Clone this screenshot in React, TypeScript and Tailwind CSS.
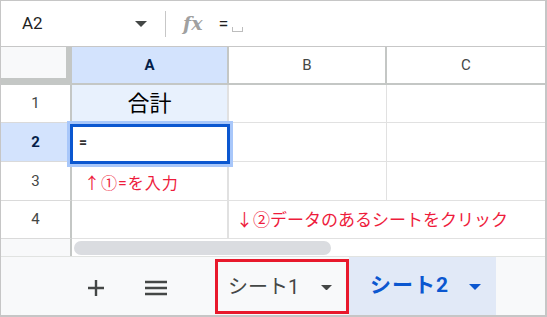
import React from 'react';

const jp = { fontFamily: 'Roboto, "Noto Sans CJK JP", sans-serif' };

const Caret = ({ color = '#444746', size = 10 }: { color?: string; size?: number }) => (
  <svg width={size} height={size / 2} viewBox="0 0 10 5">
    <path d="M0 0 L10 0 L5 5 Z" fill={color} />
  </svg>
);

const ColHeader = ({ label, active, w }: { label: string; active?: boolean; w: string }) => (
  <div
    className={`${w} h-full flex items-center justify-center border-r-2 border-b-2 border-[#c4c7c5] text-[15px] ${
      active ? 'bg-[#d3e3fd] text-[#041e49] font-bold' : 'bg-white text-[#444746]'
    }`}
  >
    {label}
  </div>
);

const RowHead = ({ n, active }: { n: string; active?: boolean }) => (
  <div
    className={`w-[71px] h-full flex items-center justify-center border-r-2 border-[#c4c7c5] border-b border-b-[#dadada] text-[15px] ${
      active ? 'bg-[#d3e3fd] text-[#041e49] font-bold' : 'bg-white text-[#444746]'
    }`}
  >
    {n}
  </div>
);

export default function App() {
  return (
    <div
      className="w-[547px] h-[317px] flex flex-col bg-white border-t border-l border-r-2 border-b-2 border-[#c6c6c6] overflow-hidden"
      style={jp}
    >
      {/* formula bar */}
      <div className="h-[46px] shrink-0 flex items-center border-b border-[#c7c7c7]">
        <div className="w-[164px] flex items-center pl-[21px] pr-[18px]">
          <span className="text-[17px] text-[#1f1f1f] flex-1">A2</span>
          <Caret size={12} />
        </div>
        <div className="w-px h-[26px] bg-[#c7c7c7]" />
        <span className="ml-[17px] text-[19px] italic font-bold text-[#a0a0a0]" style={{ fontFamily: '"DejaVu Serif", serif' }}>
          fx
        </span>
        <span className="ml-[16px] text-[18px] text-[#1f1f1f]">=</span>
        <span className="ml-[4px] mt-[12px] w-[11px] h-[5px] border-l border-r border-b border-[#bdbdbd]" />
      </div>

      {/* grid */}
      <div className="relative flex flex-col">
        <div className="h-[38px] flex">
          <div className="w-[71px] h-full bg-[#c4c7c5] flex items-start">
            <div className="w-[65px] h-[31px] bg-[#f8f9fa]" />
          </div>
          <ColHeader label="A" active w="w-[157px]" />
          <ColHeader label="B" w="w-[158px]" />
          <div className="flex-1 h-full flex items-center justify-center border-b-2 border-[#c4c7c5] text-[15px] text-[#444746]">
            C
          </div>
        </div>

        {/* row 1 */}
        <div className="h-[38px] flex">
          <RowHead n="1" />
          <div className="w-[157px] flex items-center justify-center bg-[#e8f1fd] border-r-2 border-r-[#e1e1e1] border-b border-b-[#e1e1e1] text-[22px] text-black">
            合計
          </div>
          <div className="w-[158px] border-r border-b border-[#e1e1e1]" />
          <div className="flex-1 border-b border-[#e1e1e1]" />
        </div>

        {/* row 2 */}
        <div className="h-[39px] flex">
          <RowHead n="2" active />
          <div className="w-[157px] flex items-center pl-[7px] border-r-2 border-r-[#e1e1e1] border-b border-b-[#e1e1e1] text-[14px] font-bold text-[#333]">
            =
          </div>
          <div className="w-[158px] border-r border-b border-[#e1e1e1]" />
          <div className="flex-1 border-b border-[#e1e1e1]" />
        </div>

        {/* row 3 */}
        <div className="h-[39px] flex">
          <RowHead n="3" />
          <div className="w-[157px] flex items-end pl-[12px] pb-[4px] border-r-2 border-r-[#e1e1e1] border-b border-b-[#e1e1e1] text-[16px] tracking-[1px] text-[#ee1c3c] whitespace-nowrap">
            ↑①=を入力
          </div>
          <div className="w-[158px] border-r border-b border-[#e1e1e1]" />
          <div className="flex-1 border-b border-[#e1e1e1]" />
        </div>

        {/* row 4 */}
        <div className="h-[38px] flex">
          <RowHead n="4" />
          <div className="w-[157px] border-r-2 border-r-[#e1e1e1] border-b border-b-[#e1e1e1]" />
          <div className="flex-1 flex items-end pl-[7px] pb-[5px] border-b border-[#e1e1e1] text-[17px] text-[#ee1c3c] whitespace-nowrap">
            ↓②データのあるシートをクリック
          </div>
        </div>

        {/* scroll row */}
        <div className="h-[17px] flex">
          <div className="w-[71px] h-full bg-[#f8f9fa] border-r-2 border-[#c4c7c5]" />
          <div className="flex-1 pl-[2px] pt-[2px]">
            <div className="w-[257px] h-[14px] rounded-full bg-[#dadce0]" />
          </div>
        </div>

        {/* selection */}
        <div className="absolute left-[66px] top-[74px] w-[166px] h-[46px] border-[3px] border-[#a8c7fa]">
          <div className="w-full h-full border-[3px] border-[#0b57d0]" />
        </div>
      </div>

      {/* tab bar */}
      <div className="flex-1 flex items-stretch bg-[#f8f9fa] border-t border-[#e1e3e1]">
        <div className="w-[214px] flex items-center">
          <div className="flex justify-center ml-[86px] mt-[4px]">
            <svg width="18" height="18" viewBox="0 0 18 18">
              <path d="M9 1 V17 M1 9 H17" stroke="#444746" strokeWidth="2.4" />
            </svg>
          </div>
          <div className="flex justify-center ml-[40px] mt-[4px]">
            <svg width="22" height="16" viewBox="0 0 22 16">
              <path d="M0 2 H22 M0 8 H22 M0 14 H22" stroke="#444746" strokeWidth="2.4" />
            </svg>
          </div>
        </div>
        <div className="w-[134px] mt-[2px] mb-[1px] border-[3px] border-[#e8192c] flex items-center pl-[10px] gap-[22px]">
          <span className="text-[20px] text-[#444746]">シート1</span>
          <span className="mt-[2px]">
            <Caret size={11} />
          </span>
        </div>
        <div className="w-[147px] bg-[#e1e9f7] flex items-center pl-[21px] gap-[20px]">
          <span className="text-[21px] font-bold text-[#0b57d0] tracking-[1px]">シート2</span>
          <span className="mt-[2px]">
            <Caret color="#0b57d0" size={12} />
          </span>
        </div>
      </div>
    </div>
  );
}
